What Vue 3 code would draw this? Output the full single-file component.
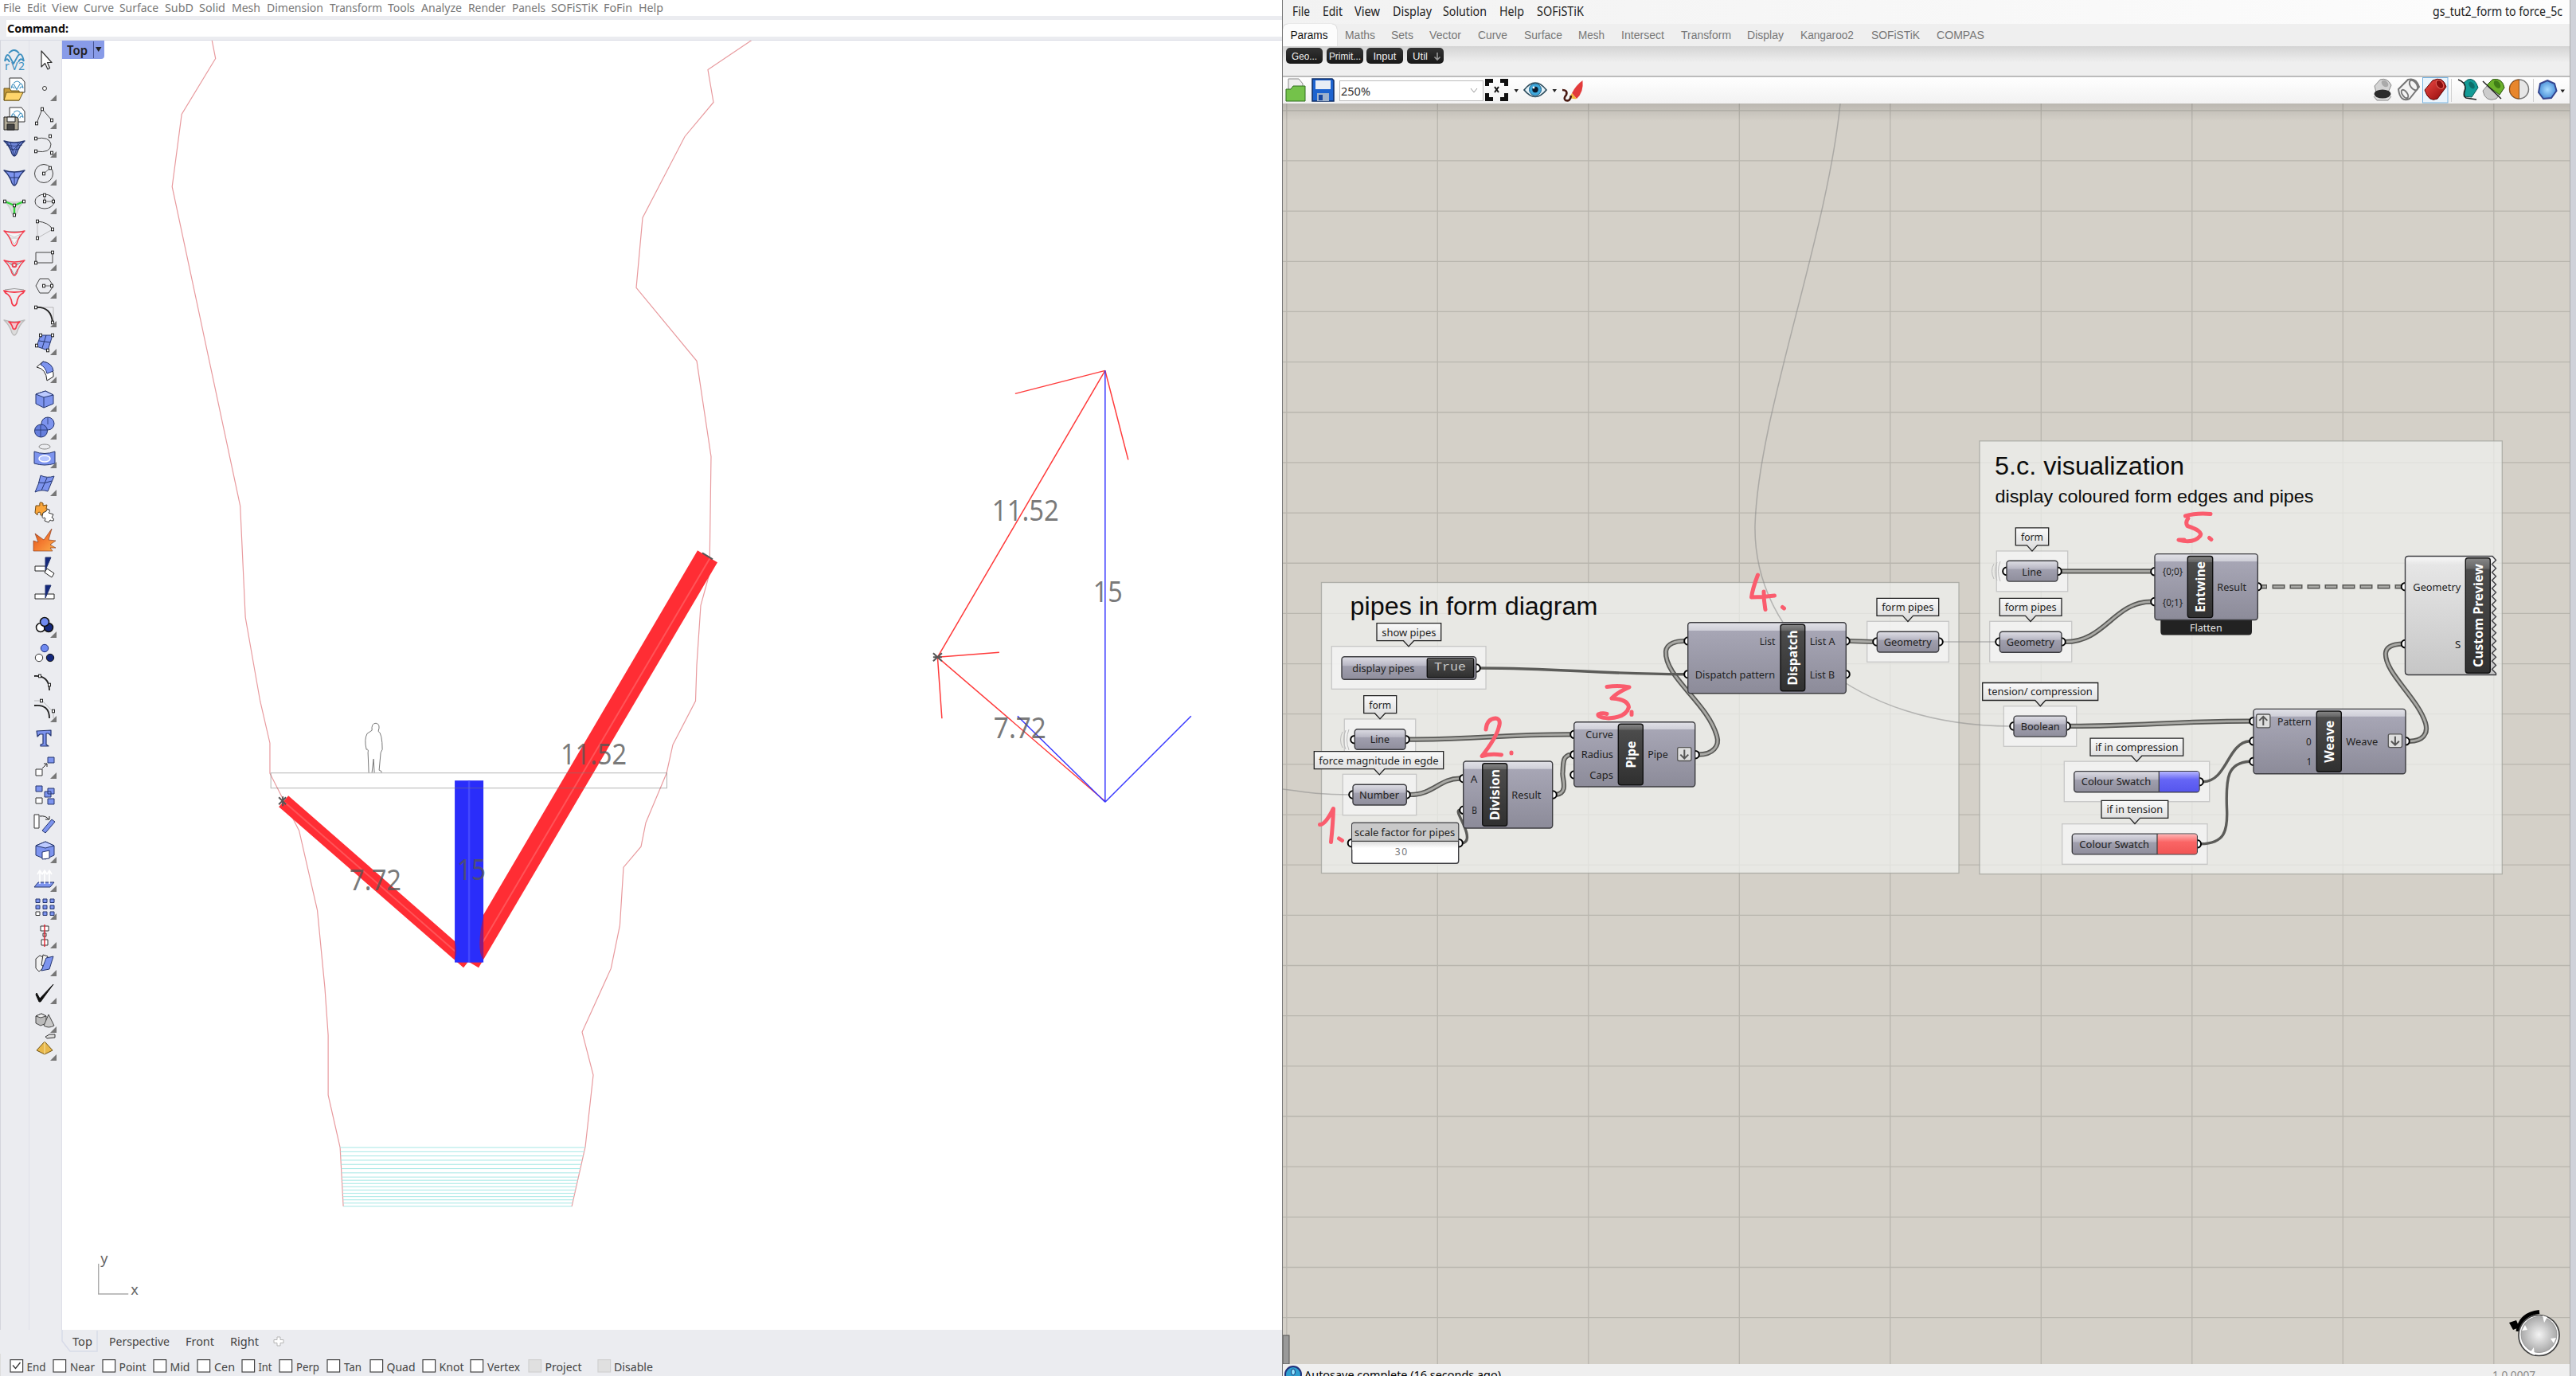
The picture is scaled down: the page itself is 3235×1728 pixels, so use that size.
<script setup>
const rhinoMenu = [
  ['File', 4, 22], ['Edit', 34, 24], ['View', 65, 33], ['Curve', 105, 38], ['Surface', 150, 49], ['SubD', 207, 36],
  ['Solid', 250, 33], ['Mesh', 291, 36], ['Dimension', 335, 71], ['Transform', 414, 66], ['Tools', 487, 34],
  ['Analyze', 529, 51], ['Render', 588, 47], ['Panels', 643, 42], ['SOFiSTiK', 692, 59], ['FoFin', 758, 36], ['Help', 802, 31],
]
const ghMenu = [['File', 12, 22], ['Edit', 50, 25], ['View', 90, 32], ['Display', 138, 49], ['Solution', 201, 55], ['Help', 272, 31], ['SOFiSTiK', 319, 59]]
const ghTabs = [
  ['Maths', 78, 38], ['Sets', 136, 28], ['Vector', 184, 40], ['Curve', 245, 37], ['Surface', 303, 48], ['Mesh', 371, 33],
  ['Intersect', 425, 54], ['Transform', 500, 63], ['Display', 583, 46], ['Kangaroo2', 650, 67], ['SOFiSTiK', 739, 61], ['COMPAS', 821, 60],
]
const pills = [['Geo...', 32], ['Primit...', 40], ['Input', 29], ['Util', 19]]
const viewTabs = [['Top', 13, 25], ['Perspective', 58.6, 76], ['Front', 155, 36], ['Right', 211, 36]]
const snaps = [
  ['End', 12, 32.5, 24], ['Near', 66, 87, 31], ['Point', 128, 148.5, 34], ['Mid', 192, 212.5, 25], ['Cen', 247, 268, 26],
  ['Int', 303, 323.5, 17], ['Perp', 350, 371, 29], ['Tan', 410, 431, 22], ['Quad', 463.5, 484, 36], ['Knot', 529.5, 550, 31],
  ['Vertex', 590, 611, 41], ['Project', 663, 683.5, 46], ['Disable', 750, 770, 49],
]
const slot = (list, i, start) => {
  const nextX = i + 1 < list.length ? list[i + 1][1] : list[i][1] + list[i][2]
  return { width: nextX - list[i][1] + 'px', marginLeft: i === 0 ? list[0][1] - start + 'px' : '0' }
}

const pt = (x, y) => `<rect x="${x - 1.5}" y="${y - 1.8}" width="3" height="3.6" fill="#fff" stroke="#222" stroke-width="1"/>`
const ln = (d, w = 1, c = '#444', f = 'none') => `<path d="${d}" fill="${f}" stroke="${c}" stroke-width="${w}" stroke-linejoin="round"/>`
const B = '#7d94ee', D = '#24356f', L = '#bccaff'
const vault = (fill, stroke, w = 1.4) => ln('M1 4Q14 8 27 4Q20 10 17 20Q14 26 11 20Q8 10 1 4Z', w, stroke, fill)
const brand = (s) => `<g transform="${s}">${ln('M2 14Q4 2 8 8L13 17L18 8Q23 0 26 14M7 4Q14-4 20 4M2 14Q5 8 8 15M26 14Q22 8 19 15', 1.8, '#3d8fbf')}</g>`

const leftIcons = [
  brand('translate(0 3)') + '<text x="2" y="28" font-size="14" fill="#3d8fbf" font-family="Noto Sans">r</text><text x="10" y="28" font-size="14" fill="#3d8fbf" font-family="Noto Sans">V</text><text x="19" y="28" font-size="14" fill="#3d8fbf" font-family="Noto Sans">2</text>',
  ln('M8 0H23L27 5V18H8Z', 1, '#333', '#fff') + brand('translate(9 4) scale(.62)') + ln('M1 13H8L10 16H20V28H1Z', 1, '#6b5417', '#c59a3a') + ln('M4 18H25L20 28H1Z', 1, '#6b5417', '#ffd56b'),
  ln('M8 0H23L27 5V18H8Z', 1, '#333', '#fff') + brand('translate(9 4) scale(.62)') + ln('M1 12H17L19 14V28H1Z', 1, '#222', '#b0a996') + ln('M5 12H15V18H5Z', 1, '#222', '#eee') + ln('M5 21H14V28H5Z', 1, '#222', '#444'),
  vault('#6f86d8', D) + ln('M4 9Q14 12 24 9M8 14Q14 16 20 14M9 6L14 23L19 6M5 6L12 16L22 6', 0.8, D),
  vault(B, D) + ln('M14 6V23M8 13H20', 1, D),
  vault('#ddd', '#ccc') + ln('M2 5L14 10L26 5M14 10V22', 2.4, '#2fd43a') + pt(2, 5) + pt(26, 5) + pt(14, 10) + pt(14, 22),
  ln('M3 5H25M6 8L14 21L22 8L14 12ZM9 13H19', 1, '#888') + vault('#fff8', '#f4394a'),
  ln('M4 5L14 12L24 5M10 15L14 23L18 15M9 8H19', 1, '#888') + vault('none', '#f4394a') + '<circle cx="14" cy="10" r="2.5" fill="none" stroke="#f4394a" stroke-width="1.6"/>',
  ln('M2 3Q14 0 26 3', 1, '#999') + ln('M1 4Q14 8 27 4L25 7Q18 10 17 20Q14 26 11 20Q10 10 3 7Z', 1.8, '#f4394a', '#ececf0'),
  vault('#dcdcdc', '#bbb') + ln('M7 6Q14 8 21 6Q17 9 16 14Q14 17 12 14Q11 9 7 6Z', 1.6, '#f4394a', '#f5c8cf'),
]

const toolIcons = [
  [ln('M10 2V22L14.5 17.5L18 25L20.5 23.5L17.5 16.5H23Z', 1.2, '#333', '#fff'), 0],
  ['<ellipse cx="14" cy="14" rx="2.5" ry="2.5" fill="#fff" stroke="#333"/>', 1],
  [ln('M4 22L11 4L23 18') + pt(4, 22) + pt(11, 4) + pt(23, 18), 1],
  [ln('M3 6Q20 3 22 13Q22 25 3 22') + pt(3, 6) + pt(21, 3) + pt(3, 22) + pt(23, 24), 1],
  ['<circle cx="13" cy="14" r="11.5" fill="none" stroke="#444"/>' + ln('M13 14L21 7', 0.8) + pt(13, 14) + pt(21, 7), 1],
  ['<ellipse cx="14" cy="14" rx="12" ry="9" fill="none" stroke="#444"/>' + ln('M14 6V14H25', 0.8) + pt(14, 6) + pt(14, 14) + pt(25, 14), 1],
  [ln('M5 4Q19 5 24 14') + ln('M5 4V25L24 14', 0.6, '#999') + pt(5, 4) + pt(5, 25) + pt(24, 14), 1],
  [ln('M3 7H24V20H3Z') + pt(24, 7) + pt(3, 20), 1],
  [ln('M8 5H19L25 14L19 23H8L3 14Z') + ln('M13 14H23', 0.8) + pt(13, 14) + pt(23, 14), 1],
  [ln('M3 5H25V25', 0.6, '#999') + ln('M3 5Q23 4 24 25', 1.8, '#222') + pt(3, 5) + pt(24, 24), 1],
  [ln('M9 5L24 5L18 24L4 19Z', 1, D, B) + ln('M16 5L11 21M7 12L21 14', 1, D) + pt(9, 5) + pt(24, 5) + pt(18, 24) + pt(4, 18), 1],
  [ln('M12 2Q24 4 25 17V21L17 26Q16 11 4 9Z', 1, '#222', '#fff') + ln('M12 2Q24 4 25 14L17 17Q15 9 9 6Z', 1, D, B), 1],
  [ln('M3 8L15 4L25 9V20L13 25L3 20Z', 1, D, B) + ln('M3 8L15 4L25 9L13 12Z', 1, D, L) + ln('M13 12V25', 1, D), 1],
  ['<circle cx="18" cy="9" r="8" fill="#7d94ee" stroke="#24356f"/><circle cx="9.500" cy="18" r="8" fill="#667fdd" stroke="#24356f"/>' + ln('M2 17H17M9 10V26M18 1V10', 0.8, D), 1],
  ['<ellipse cx="14" cy="3" rx="7" ry="3" fill="none" stroke="#888"/>' + ln('M1 9Q14 14 27 9V24Q14 28 1 24Z', 1, D, B) + '<ellipse cx="14" cy="18" rx="7" ry="4" fill="#b4c4ff" stroke="#fff" stroke-width="1.500"/>', 1],
  [ln('M9 3Q17 7 26 4L18 23Q10 20 2 24Q7 14 9 3Z', 1, D, B) + ln('M17 6L10 22M6 12Q14 14 23 10', 1, D), 1],
  [ln('M3 6H8Q7 1 10 2Q13 2 12 6L17 5L16 10Q20 10 19 13Q17 15 15 13L14 18H9Q10 14 7 14Q4 15 5 18L2 15Z', 1, '#744b12', '#f9a53a') + ln('M12 15L16 13Q17 9 20 11Q21 14 19 15L25 17L23 21Q27 22 25 25Q22 25 21 24L19 27L14 25Q16 22 14 21Q11 23 11 19Z', 1, '#333', '#fff'), 0],
  ['<defs><linearGradient id="burst" x1="0" y1="0" x2="1" y2="1"><stop offset="0" stop-color="#d3541a"/><stop offset=".5" stop-color="#f47a30"/><stop offset="1" stop-color="#fbb04a"/></linearGradient></defs><path d="M0 28V15L6 17L2 6L13 14L23 0L19 14L28 15L21 20L28 24L21 24L24 28Z" fill="url(#burst)" stroke="#7c2d12" stroke-width=".6"/>', 0],
  [ln('M2 11H16V17H2Z', 1, '#222', '#fff') + ln('M17 14L26 20L23 25L14 19Z', 1, '#222', '#fff') + ln('M15 0H22L15 16Z', 1, D, '#14287c'), 0],
  [ln('M2 11H26V17H2Z', 1, '#222', '#fff') + ln('M15 0H22L15 16Z', 1, D, '#14287c'), 0],
  ['<circle cx="9" cy="17" r="5.500" fill="#fff" stroke="#111" stroke-width="1.500"/><circle cx="19" cy="17" r="5.500" fill="#14287c" stroke="#111" stroke-width="1.500"/><circle cx="14" cy="10" r="5.500" fill="#6f8af0" stroke="#111" stroke-width="1.500"/>', 1],
  ['<circle cx="7" cy="20" r="4.700" fill="#fff" stroke="#333"/><circle cx="21" cy="20" r="4.700" fill="#14287c" stroke="#111"/><circle cx="14" cy="8" r="4.700" fill="#6f8af0" stroke="#14287c"/>', 0],
  [ln('M1 7Q20 6 20 25', 1.8, '#222') + pt(8, 7) + pt(20, 18), 0],
  [ln('M1 9Q20 7 20 25', 1.8, '#222') + ln('M1 3H11L25 17V25', 0.6, '#999') + pt(10, 3) + pt(25, 16), 1],
  [ln('M4 5L22 4V11L19 8H16V22L19 24H9V22L12 21V9H8L5 12Z', 1.2, D, B), 0],
  [ln('M3 18H11V26H3Z', 1, '#333', '#fff') + ln('M18 3H26V10H18Z', 1, D, B) + ln('M11 17L17 11M13 11H17V15', 1, '#222'), 1],
  [ln('M3 3H11V10H3Z', 1, D, B) + ln('M3 18H11V25H3Z', 1, '#333', '#fff') + ln('M18 6H26V13H18ZM14 10H22V17H14ZM18 19H26V26H18Z', 1, D, B), 0],
  [ln('M1 4H7V21H1Z', 1, '#333', '#fff') + ln('M11 24L23 10L27 13L15 27Z', 1, D, B) + ln('M8 6Q16 5 19 10M15 10H20V6', 1, '#222'), 0],
  [ln('M3 8L15 3L26 8V20L15 25L3 20Z', 1, D, B) + ln('M3 8L15 3L26 8L15 11Z', 1, D, L) + ln('M11 16L20 14V24L11 25Z', 1, D, '#fff'), 1],
  [ln('M6 18H26L21 24H1Z', 1, D, B) + ln('M8 20V5M5 8L8 3L11 8M14 20V5M11 8L14 3L17 8M20 20V5M17 8L20 3L23 8', 1.6, '#fff'), 1],
  [[0, 1, 2].map((r) => [0, 1, 2].map((c) => ln(`M${3 + c * 9} ${4 + r * 8}h5v4.500h-5Z`, 1, r === 2 && c === 0 ? '#333' : D, r === 2 && c === 0 ? '#fff' : B)).join('')).join(''), 1],
  [ln('M9 2H19V8H9ZM12 11H16V15H12ZM10 19H18V26H10Z', 1, '#333', '#fff') + ln('M14 0V28', 1.4, '#e11d2a'), 1],
  [ln('M3 8L8 4L12 6V20L7 24L3 20Z', 1, '#333', '#f2f2f2') + ln('M12 3L18 5L14 18L10 16Z', 1, '#333', '#eee') + ln('M16 7L25 5L20 21L10 23Z', 1, D, B), 1],
  [ln('M4 15L8 22L25 4L9 26H7L3 17Z', 1, '#111', '#111'), 1],
  [ln('M3 9L10 6L16 9V18L9 21L3 18Z', 1, '#444', '#bbb') + ln('M3 9L10 6L16 9L9 11Z', 1, '#444', '#eee') + ln('M19 7L26 21Q19 25 13 21Z', 1, '#444', '#c8c8c8'), 1],
  [ln('M15 -1L20 -4H27V0L17 1Z', 1, '#333', '#ddd') + ln('M14 5L24 16L14 21L4 16Z', 1, '#6b4f10', '#e8b84b') + ln('M14 5V21', 0.8, '#fff2c0'), 1],
]

const vLines = Array.from({ length: 9 }, (_, i) => 1615.8 + i * 189.5)
const hLines = Array.from({ length: 25 }, (_, i) => 138.8 + i * 63.16)

const groups = [
  { x: 1659.5, y: 731.5, w: 800.5, h: 365, main: 1 }, { x: 2486, y: 553.8, w: 656.3, h: 543.8, main: 1 },
  { x: 1672.3, y: 811.7, w: 193.7, h: 53.6 }, { x: 1688.3, y: 903, w: 89.4, h: 51 }, { x: 1686.3, y: 972.3, w: 92.4, h: 51.4 },
  { x: 2344.7, y: 780.3, w: 102.6, h: 51 }, { x: 2507.3, y: 692, w: 89.4, h: 50.8 }, { x: 2498.7, y: 780.3, w: 103, h: 50.9 },
  { x: 2516.3, y: 886.8, w: 91.4, h: 50.5 }, { x: 2592.3, y: 956.2, w: 182.4, h: 50.5 }, { x: 2589.7, y: 1034.7, w: 182.3, h: 50.6 },
]
const tags = [
  ['show pipes', 1729, 782.7, 80.7, 68.3, 1769], ['form', 1712.7, 873.7, 41, 28, 1733], ['force magnitude in egde', 1650.3, 943.7, 162.4, 150.4, 1732.3],
  ['form pipes', 2357, 751.3, 77.7, 65.3, 2396], ['form', 2531.3, 662.9, 41.4, 28, 2552], ['form pipes', 2511.3, 751.3, 77.7, 65, 2550],
  ['tension/ compression', 2489.7, 857.5, 145, 131.3, 2562.3], ['if in compression', 2625, 927.2, 116.7, 104.3, 2683.3], ['if in tension', 2639, 1005.3, 83.7, 70.7, 2681],
]
/* node: x, y, w, h, bar [x, y, w, h, label, length], ports [x, y, side], texts [label, x, baseline, width] */
const nodes = [
  { x: 1685, y: 824.7, w: 168.7, h: 28.6, ports: [[1854, 839, 1]], texts: [['display pipes', 1698.3, 844.3, 78]] },
  { x: 1701.3, y: 915.7, w: 63.7, h: 25.6, ports: [[1701, 928.7, 0], [1765, 928.7, 1]], texts: [['Line', 1720.7, 933.3, 24.3]] },
  { x: 1699, y: 985.3, w: 67.3, h: 25.7, ports: [[1699, 998, 0], [1766, 998, 1]], texts: [['Number', 1707, 1003, 50]] },
  { x: 1837.7, y: 956, w: 112, h: 84, bar: [1861.7, 958.7, 31, 78.6, 'Division', 64], ports: [[1838, 977.7, 0], [1838, 1017.3, 0], [1950, 998, 1]], texts: [['A', 1846.7, 983.3, 8.6], ['B', 1848.3, 1022.3, 6.7], ['Result', 1898.3, 1003, 37]] },
  { x: 1976.7, y: 906.7, w: 152, h: 81.3, bar: [2032.3, 909.3, 31, 76.4, 'Pipe', 34], ports: [[1977, 922.3, 0], [1977, 947.7, 0], [1977, 973, 0], [2129, 947.7, 1]], texts: [['Curve', 1991.3, 927.3, 34.7], ['Radius', 1985.7, 952.3, 40.3], ['Caps', 1996.3, 977.7, 29.7], ['Pipe', 2069.3, 952.3, 25.4]] },
  { x: 2119.7, y: 781.7, w: 198.6, h: 89, bar: [2236, 784.3, 30.7, 83.4, 'Dispatch', 69], ports: [[2120, 805, 0], [2120, 846.7, 0], [2318, 805, 1], [2318, 846.7, 1]], texts: [['List', 2209.7, 810.3, 19.6], ['Dispatch pattern', 2128.7, 852, 100.6], ['List A', 2272.7, 810.3, 32], ['List B', 2272.7, 852, 31.3]] },
  { x: 2357.3, y: 793.3, w: 77.4, h: 25.7, ports: [[2357, 806, 0], [2435, 806, 1]], texts: [['Geometry', 2365.7, 811, 60]] },
  { x: 2520, y: 704.3, w: 64, h: 25.8, ports: [[2520, 717.4, 0], [2584, 717.4, 1]], texts: [['Line', 2539.3, 722.5, 24.7]] },
  { x: 2511.3, y: 793.2, w: 77.7, h: 26, ports: [[2511, 806, 0], [2589, 806, 1]], texts: [['Geometry', 2519.7, 811, 60]] },
  { x: 2529, y: 899.1, w: 66.3, h: 26, ports: [[2529, 911.9, 0], [2595, 911.9, 1]], texts: [['Boolean', 2537.7, 917, 49]] },
  { x: 2706, y: 695.6, w: 129.3, h: 82.9, bar: [2747.3, 698.5, 31.4, 77.1, 'Entwine', 64], ports: [[2706, 717.8, 0], [2706, 755.6, 0], [2835, 736.7, 1]], texts: [['{0;0}', 2715.7, 722.3, 25.6], ['{0;1}', 2715.7, 760.6, 25.6], ['Result', 2784.3, 741.7, 36.7]] },
  { x: 2830, y: 890.4, w: 191, h: 81.4, bar: [2909.3, 893, 31, 76.3, 'Weave', 53], ports: [[2830, 905.7, 0], [2830, 930.8, 0], [2830, 956.2, 0], [3021, 930.8, 1]], texts: [['Pattern', 2860, 910.6, 42.7], ['0', 2896, 935.9, 6.7], ['1', 2896.5, 961, 6.7], ['Weave', 2946.3, 935.9, 40]] },
  { x: 2604.7, y: 968.6, w: 157.3, h: 26.1, swatch: [2711.3, 'blue'], ports: [[2762, 981.7, 1]], texts: [['Colour Swatch', 2613.7, 986.4, 87.6]] },
  { x: 2602.3, y: 1047.1, w: 157, h: 25.8, swatch: [2709, 'red'], ports: [[2759.3, 1059.8, 1]], texts: [['Colour Swatch', 2611.3, 1064.6, 87.7]] },
]
const arrows = [[2106.7, 938.7, 1], [2999.3, 921.8, 1], [2833.7, 897, -1]]
const zigzag = (() => {
  let d = 'M3024.5 698.5H3130L3134.500 703.500'
  for (let i = 0; i < 14; i++) {
    const y = 703.5 + i * 10.15
    d += `L3129.5 ${y + 5}L3134.5 ${y + 10.15}`
  }
  return d + 'V847.5H3024.500Q3020.500 847.500 3020.500 843.500V702.500Q3020.500 698.500 3024.500 698.500Z'
})()
const doubleWires = [
  'M1770 928.7C1860 928.7 1885 922 1972 922.3', 'M1771 998C1800 998 1808 977.7 1833 977.7', 'M1954 998C1971 996 1961 976 1962.500 970C1963.500 958 1962 950 1972 947.7',
  'M2133 947.7C2151 947.700 2160 937 2156 924C2144 882 2090 850 2092 818C2093 808 2105 805 2115 805', 'M2323 805L2352 806',
  'M2589 717.4H2701', 'M2594 806C2643 806 2655 756 2701 755.6', 'M2600 911.9C2690 912 2730 905.5 2825 905.7',
  'M3026 930.8C3042 930.800 3050 922 3046 908C3036 876 2994 844 2996 820C2997 811 3006 809 3016 808.6',
]
const singleWires = [
  'M1859 839C1960 839 2010 846.700 2115 846.7', 'M1836 1058.7C1844 1058 1844 1050 1839 1038C1835 1028 1828 1018 1833 1017.300',
  'M2767 981.7C2797 981 2797 933 2825 930.8', 'M2764 1059.8C2793 1059 2798 1045 2796.500 1015C2795 975 2798 958 2825 956.2',
]
const ink = [
  'M1657.5 1035.500Q1664 1036 1674.500 1015.500Q1674 1034 1671.500 1057.500M1681.500 1053L1685.500 1055.500',
  'M1866 916Q1867 903 1878 902Q1886 903 1882 914C1879 926 1870 938 1861 949.500Q1872 946 1885.500 948M1898 945V946',
  'M2018 862.500Q2034 860.500 2046 863Q2030 870 2024 877Q2044 878 2045.500 888Q2042 901 2020 902Q2006 901 2007 897Q2012 895 2018 896.500M2049 894V897.500',
  'M2207.500 722Q2201 739 2199.500 750Q2214 750 2228.500 748M2215 743Q2215 755 2217 765.500M2238.500 762.500L2240.500 764',
  'M2744.500 648Q2758 644 2776 645.500M2748 651Q2744 656 2747 660.500Q2767 667 2763 673Q2755 683 2736 678H2743M2774.500 675.500L2777 677.500',
]
const hatch = Array.from({ length: 17 }, (_, i) => 1441 + (i < 8 ? i * 5.3 : 37 + (i - 7) * 4.1))
  .map((y) => ({ y, x1: 427 + (y - 1441) * 0.055, x2: 735 - (y - 1441) * 0.23 }))
</script>

<template>
  <div class="screen">
    <section class="rhino">
      <nav class="rhino-menu">
        <svg v-for="(m, i) in rhinoMenu" :key="m[0]" class="word" :style="slot(rhinoMenu, i, 0)">
          <text x="0" y="15" :textLength="m[2]" lengthAdjust="spacingAndGlyphs">{{ m[0] }}</text>
        </svg>
      </nav>
      <div class="command"><svg class="word"><text x="1" y="16" textLength="77" lengthAdjust="spacingAndGlyphs">Command:</text></svg></div>
      <div class="work">
        <aside class="strip first">
          <svg v-for="(ic, i) in leftIcons" :key="i" class="tool" viewBox="0 0 28 28" v-html="ic"></svg>
        </aside>
        <aside class="strip second">
          <div v-for="(ic, i) in toolIcons" :key="i" class="cell">
            <svg class="glyph" viewBox="0 0 28 28" v-html="ic[0]"></svg>
            <i v-if="ic[1]" class="corner"></i>
          </div>
        </aside>
        <main class="view">
          <svg class="drawing" viewBox="78 50.500 1532 1619.500">
            <g class="cliff">
              <path d="M266 50L270.500 73L228 143L216 234L301.500 635L308 775L326.500 880L338.800 933L338.800 971L375.500 1043L398.400 1143L407.800 1240L412 1300L412 1375L427 1441L431 1515" />
              <path d="M944 50L889 87L896 128L860 171L807 273L799 361L875 453L893 573L891 720L880 760L875 835L873.500 880L845 935L837 971L811 1033L805 1063L783 1089L778.400 1162L767.300 1216L731 1296L745 1350L735 1440L718 1515" />
            </g>
            <g class="water"><line v-for="h in hatch" :key="h.y" :x1="h.x1" :x2="h.x2" :y1="h.y" :y2="h.y" /></g>
            <path class="person" d="M463 970L462 945Q463 940 460 941Q457 928 461 921L467 917Q466 908 472 908Q478 909 475 918Q480 921 480 941L478 945L476 967Q480 968 479 970M467 970L469 953L470 970" />
            <polygon class="red-pipe" points="362,999 593,1201 582,1215 350,1013" />
            <path class="pipe-light" d="M357 1007L587 1208" />
            <path class="origin" d="M350 1001L359 1010M359 1001L350 1010M355 1000V1012" />
            <polygon class="red-pipe" points="576.500,1200.600 876,691 901,706 601,1215" />
            <path class="pipe-light" d="M592 1207L892 700" />
            <rect class="blue-pipe" x="571" y="980" width="36" height="228.500" />
            <path class="blue-light" d="M589 980V1208" />
            <path d="M607 1150Q598 1190 606 1204L607 1204Z" fill="#8c1a80" />
            <path d="M571 1181Q575 1195 571 1204Z" fill="#8c1a80" />
            <rect class="deck" x="340" y="970.500" width="497.500" height="19" />
            <path class="origin" d="M882 694L895 702" />
            <g class="force">
              <path class="r" d="M1388 465L1177.500 825L1388 1006M1388 465L1275 494M1388 465L1417 577M1177.500 825L1255 819M1177.500 825L1183 902" />
              <path class="b" d="M1388 465V1007M1388 1007L1278 899M1388 1007L1496 899" />
              <path class="origin" d="M1172 820L1183 830M1183 820L1172 830M1172 825H1183" />
            </g>
            <g class="dims">
              <text x="704" y="960" textLength="83" lengthAdjust="spacingAndGlyphs">11.52</text>
              <text x="439" y="1117.500" textLength="65" lengthAdjust="spacingAndGlyphs">7.72</text>
              <text x="574" y="1105" textLength="36" lengthAdjust="spacingAndGlyphs">15</text>
              <text x="1246" y="654" textLength="84" lengthAdjust="spacingAndGlyphs">11.52</text>
              <text x="1373" y="755.500" textLength="37" lengthAdjust="spacingAndGlyphs">15</text>
              <text x="1248" y="927" textLength="66" lengthAdjust="spacingAndGlyphs">7.72</text>
            </g>
            <path class="axis" d="M123.500 1587V1625H161" />
            <g class="axis-text"><text x="126" y="1587">y</text><text x="164" y="1626">x</text></g>
          </svg>
          <div class="view-label"><svg class="word"><text x="6" y="17.500" textLength="26" lengthAdjust="spacingAndGlyphs">Top</text><path d="M39.500 1V22" stroke="#45528f" /><path d="M42 8H49.500L45.700 14Z" fill="#222" /></svg></div>
        </main>
      </div>
      <div class="view-tabs">
        <svg v-for="(t, i) in viewTabs" :key="t[0]" class="word" :style="slot(viewTabs, i, 0)">
          <text x="0" y="20" :textLength="t[2]" lengthAdjust="spacingAndGlyphs">{{ t[0] }}</text>
          <path v-if="i === 0" d="M-13 0V14L-3 27H31V1" fill="none" stroke="#d8dbe8" stroke-width="1.500" />
          <path v-if="i === 3" d="M59 9H63V12.500H67V16.500H63V20H59V16.500H55V12.500H59Z" fill="#fff" stroke="#b5b5b5" />
        </svg>
      </div>
      <div class="snaps">
        <svg v-for="(s, i) in snaps" :key="s[0]" class="word" :class="{ off: i > 10 }" :style="slot(snaps, i, 0)">
          <rect class="box" x="0" y="7.600" width="15.600" height="15.400" />
          <path v-if="i === 0" d="M3 14.500L6.500 18.500L12.500 11" fill="none" stroke="#333" stroke-width="1.300" />
          <text :x="s[2] - s[1]" y="21.500" :textLength="s[3]" lengthAdjust="spacingAndGlyphs">{{ s[0] }}</text>
        </svg>
      </div>
    </section>

    <section class="gh">
      <header class="gh-menu">
        <nav class="row">
          <svg v-for="(m, i) in ghMenu" :key="m[0]" class="word" :style="slot(ghMenu, i, 0)"><text x="0" y="20.300" :textLength="m[2]" lengthAdjust="spacingAndGlyphs">{{ m[0] }}</text></svg>
        </nav>
        <svg class="word doc"><text x="0" y="20.300" textLength="163" lengthAdjust="spacingAndGlyphs">gs_tut2_form to force_5c</text></svg>
      </header>
      <div class="gh-tabs">
        <div class="tab-on"><svg class="word"><text x="9.500" y="18.800" textLength="47" lengthAdjust="spacingAndGlyphs">Params</text></svg></div>
        <svg v-for="(m, i) in ghTabs" :key="m[0]" class="word" :style="slot(ghTabs, i, 68)"><text x="0" y="19" :textLength="m[2]" lengthAdjust="spacingAndGlyphs">{{ m[0] }}</text></svg>
      </div>
      <div class="ribbon">
        <div v-for="(p, i) in pills" :key="p[0]" class="pill">
          <svg class="word">
            <text :x="i === 3 ? 7 : (46 - p[1]) / 2" y="15" :textLength="p[1]" lengthAdjust="spacingAndGlyphs">{{ p[0] }}</text>
            <path v-if="i === 3" d="M38 6V15M34.500 11.500L38 15L41.500 11.500" fill="none" stroke="#999" stroke-width="1.600" />
          </svg>
        </div>
      </div>
      <div class="toolbar">
        <svg class="tb-left" viewBox="0 0 400 33">
          <path d="M7 2H20L25 8V20H7Z" fill="#eee" stroke="#888" /><path d="M4 15H10L13 11H28V30H4Z" fill="#74c24a" stroke="#2f6f1c" />
          <path d="M37 2H62L64 4V30H37Z" fill="#1d63cf" stroke="#0d2c66" stroke-width="1.500" /><path d="M41 4H60V15H41Z" fill="#e9eef5" /><path d="M43 20H58V30H43Z" fill="#9fb2cc" /><path d="M45 22H50V29H45Z" fill="#1746a0" />
          <rect x="71.500" y="4.500" width="180" height="25" fill="#fff" stroke="#bdbdbd" /><text x="73" y="22.500" textLength="37" lengthAdjust="spacingAndGlyphs">250%</text><path d="M236 14L240 19L244 14" fill="none" stroke="#999" />
          <path d="M256.500 11V4.500H264M273 4.500H280.500V11M280.500 20V27.500H273M264 27.500H256.500V20" fill="none" stroke="#111" stroke-width="5" /><path d="M266 12L271 19M271 12L266 19" stroke="#111" stroke-width="2" />
          <path d="M290.500 15H296L293.200 19ZM338.500 15H344L341.200 19Z" fill="#222" />
          <path d="M303 16Q317-2 331 16Q317 33 303 16Z" fill="#e3f1f7" stroke="#2b4b5b" stroke-width="1.700" /><circle cx="317" cy="15.500" r="7.500" fill="#3fa9dc" stroke="#1c5f8a" /><circle cx="317" cy="15.500" r="3.700" fill="#0b1a2b" /><circle cx="315" cy="13" r="1.400" fill="#fff" />
          <path d="M376.500 4Q368 10 363 20L369 27Q378 19 376.500 4Z" fill="#e33b3b" /><path d="M363 20L369 27Q364 28 360 25Z" fill="#f3b73c" /><path d="M362 23Q361 31 355 29Q352 27 356 22Q358 16 351 16" fill="none" stroke="#4a1a12" stroke-width="2.600" />
        </svg>
        <svg class="tb-right" viewBox="2977 97 250 33">
          <defs>
            <linearGradient id="redCyl" x1="0" y1="0" x2="1" y2="1"><stop offset="0" stop-color="#f04a45" /><stop offset="1" stop-color="#8d0808" /></linearGradient>
            <radialGradient id="blueBall"><stop offset="0" stop-color="#a8dcff" /><stop offset="1" stop-color="#4a90d9" /></radialGradient>
          </defs>
          <path d="M2982 108L2989 100Q2998 97 3003 107L2999 116H2984Z" fill="#d4d4d4" stroke="#888" /><ellipse cx="2995" cy="105" rx="5" ry="3.500" transform="rotate(45 2995 105)" fill="#aaa" /><path d="M2981 121L2985 126H2999L3003 121" fill="#ddd" stroke="#888" /><ellipse cx="2992" cy="118" rx="10.500" ry="5.500" fill="#2b2b2b" />
          <g fill="#f4f4f4" stroke="#777" stroke-width="2"><path d="M3012 112L3024 100Q3034 97 3038 109L3026 124Q3014 129 3012 112Z" /><ellipse cx="3031" cy="107" rx="4" ry="7" transform="rotate(-35 3031 107)" /><ellipse cx="3020" cy="118" rx="3" ry="6" transform="rotate(-35 3020 118)" /></g>
          <rect x="3042.500" y="97.500" width="31.500" height="31.500" fill="#eaf4fc" stroke="#77b2df" />
          <path d="M3045 113L3055 101Q3068 95 3072 109L3061 124Q3050 129 3045 113Z" fill="url(#redCyl)" stroke="#5c0606" /><ellipse cx="3064" cy="106" rx="4" ry="6" transform="rotate(-35 3064 106)" fill="#8b0f0f" stroke="#e86a60" />
          <path d="M3078.500 99V128M3181.500 99V128" stroke="#d0d0d0" />
          <path d="M3094 104L3099 100Q3108 97 3112 110L3104 122L3094 121Q3098 112 3094 104Z" fill="#139b96" stroke="#0b5a57" /><path d="M3087 100Q3096 103 3096 111Q3092 120 3097 123L3110 125" fill="none" stroke="#222" stroke-width="1.500" /><ellipse cx="3104" cy="107" rx="3" ry="5" transform="rotate(-35 3104 107)" fill="#0d6e6a" />
          <path d="M3118 114L3130 100Q3142 97 3145 110L3135 124Q3121 129 3118 114Z" fill="#ccc" stroke="#888" /><path d="M3123 107L3130 100Q3142 97 3145 110L3139 119Z" fill="#6bb12b" stroke="#2d5c0c" /><ellipse cx="3136" cy="106" rx="3.500" ry="5.500" transform="rotate(-35 3136 106)" fill="#3f7d17" /><path d="M3118 102L3141 124" stroke="#222" stroke-width="1.500" />
          <circle cx="3163.500" cy="112" r="12" fill="#e6e6e6" stroke="#777" stroke-width="1.500" /><path d="M3163.500 100A12 12 0 0 0 3163.500 124Z" fill="#e8862c" stroke="#8c4a10" />
          <path d="M3199 101L3208 105L3210.500 114L3204 123L3194 124L3188 116L3190 105Z" fill="url(#blueBall)" stroke="#34458f" stroke-width="2" />
          <path d="M3215.500 112.500H3221L3218.200 116.500Z" fill="#222" />
        </svg>
      </div>
      <svg class="canvas" viewBox="1611 130 1616 1583">
        <defs>
          <linearGradient id="capsule" x1="0" y1="0" x2="0" y2="1"><stop offset="0" stop-color="#e2e2e8" /><stop offset=".11" stop-color="#cfcfd8" /><stop offset=".12" stop-color="#a7a6b5" /><stop offset="1" stop-color="#8c8b99" /></linearGradient>
          <linearGradient id="small" x1="0" y1="0" x2="0" y2="1"><stop offset="0" stop-color="#dedee5" /><stop offset=".38" stop-color="#b9b8c5" /><stop offset=".42" stop-color="#a09fae" /><stop offset="1" stop-color="#8f8e9c" /></linearGradient>
          <linearGradient id="ink" x1="0" y1="0" x2="0" y2="1"><stop offset="0" stop-color="#888" /><stop offset=".09" stop-color="#666" /><stop offset=".1" stop-color="#4c4c4c" /><stop offset="1" stop-color="#303030" /></linearGradient>
          <linearGradient id="tagFill" x1="0" y1="0" x2="0" y2="1"><stop offset="0" stop-color="#fafafa" /><stop offset="1" stop-color="#d8d8d8" /></linearGradient>
          <linearGradient id="panelFill" x1="0" y1="0" x2="0" y2="1"><stop offset="0" stop-color="#dcdcdc" /><stop offset=".8" stop-color="#ffffff" /></linearGradient>
          <linearGradient id="pale" x1="0" y1="0" x2="0" y2="1"><stop offset="0" stop-color="#fafafa" /><stop offset=".07" stop-color="#e6e6e6" /><stop offset="1" stop-color="#c6c6c6" /></linearGradient>
          <linearGradient id="blue" x1="0" y1="0" x2="0" y2="1"><stop offset="0" stop-color="#b4b4ff" /><stop offset=".4" stop-color="#6565f5" /><stop offset="1" stop-color="#5656ee" /></linearGradient>
          <linearGradient id="red" x1="0" y1="0" x2="0" y2="1"><stop offset="0" stop-color="#ffb4b4" /><stop offset=".4" stop-color="#fa6565" /><stop offset="1" stop-color="#f15555" /></linearGradient>
          <radialGradient id="knob"><stop offset="0" stop-color="#f4f4f4" /><stop offset="1" stop-color="#aaa" /></radialGradient>
          <linearGradient id="topShade" x1="0" y1="0" x2="0" y2="1"><stop offset="0" stop-color="#000" stop-opacity=".12" /><stop offset="1" stop-color="#000" stop-opacity="0" /></linearGradient>
        </defs>
        <rect x="1611" y="130" width="1616" height="1583" fill="#d4d0c8" />
        <g class="grid">
          <line v-for="x in vLines" :key="x" :x1="x" :x2="x" y1="130" y2="1713" />
          <line v-for="y in hLines" :key="y" x1="1611" x2="3227" :y1="y" :y2="y" />
        </g>
        <rect x="1611" y="130" width="1616" height="22" fill="url(#topShade)" />
        <rect v-for="(g, i) in groups" :key="i" class="group" :class="{ sub: !g.main }" :x="g.x" :y="g.y" :width="g.w" :height="g.h" />
        <path class="faint" d="M2311 130C2294 300 2208 520 2204 660C2202 800 2330 912 2526 912M1611 991C1640 995 1660 998 1694 998M2440 806H2506" />
        <g class="title">
          <text x="1695.500" y="772.300" textLength="311" lengthAdjust="spacingAndGlyphs">pipes in form diagram</text>
          <text x="2505" y="595.600" textLength="238" lengthAdjust="spacingAndGlyphs">5.c. visualization</text>
          <text class="subtitle" x="2505.500" y="630.500" textLength="400" lengthAdjust="spacingAndGlyphs">display coloured form edges and pipes</text>
        </g>
        <g v-for="(w, i) in doubleWires" :key="'d' + i" class="wire"><path class="outer" :d="w" /><path class="inner" :d="w" /></g>
        <path v-for="(w, i) in singleWires" :key="'s' + i" class="single" :d="w" />
        <g class="dash"><path class="outer" d="M2840 736.700H2847M2853.500 736.700H3016" /><path class="inner" d="M2840 736.700H2846M2855 736.700H3016" /></g>
        <g class="waves"><path d="M1686 919Q1681 929 1686 939M1690 917Q1685 929 1690 941M1694 916Q1689 929 1694 942M2504 708Q2499 717 2504 727M2508 706Q2503 717 2508 729M2512 705Q2507 717 2512 730" /></g>

        <path class="blade" d="M2713.300 776H2828V793Q2828 797.500 2824 797.500H2717Q2713.300 797.500 2713.300 793Z" />
        <text class="flat" x="2750" y="792.600" textLength="40.700" lengthAdjust="spacingAndGlyphs">Flatten</text>

        <g v-for="(n, i) in nodes" :key="'n' + i" class="node">
          <circle v-for="(p, k) in n.ports" :key="k" class="port" :cx="p[0]" :cy="p[1]" r="4.800" />
          <rect class="body" :fill="n.bar ? 'url(#capsule)' : 'url(#small)'" :x="n.x" :y="n.y" :width="n.w" :height="n.h" rx="3.500" />
          <template v-if="n.bar">
            <rect class="bar" :x="n.bar[0]" :y="n.bar[1]" :width="n.bar[2]" :height="n.bar[3]" rx="3" />
            <text class="bar-text" :transform="`translate(${n.bar[0] + n.bar[2] / 2 + 6} ${n.bar[1] + (n.bar[3] + n.bar[5]) / 2}) rotate(-90)`" :textLength="n.bar[5]" lengthAdjust="spacingAndGlyphs">{{ n.bar[4] }}</text>
          </template>
          <template v-if="n.swatch"><rect :x="n.swatch[0]" :y="n.y + 0.5" :width="n.x + n.w - n.swatch[0] - 0.5" :height="n.h - 1" rx="2" :fill="`url(#${n.swatch[1]})`" /><line class="split" :x1="n.swatch[0]" :x2="n.swatch[0]" :y1="n.y" :y2="n.y + n.h" /></template>
          <text v-for="t in n.texts" :key="t[0]" :x="t[1]" :y="t[2]" :textLength="t[3]" lengthAdjust="spacingAndGlyphs">{{ t[0] }}</text>
        </g>
        <rect class="bar" x="1792.300" y="827" width="58.400" height="23.700" rx="1.500" />
        <text class="mono" x="1801" y="842.300" textLength="40" lengthAdjust="spacingAndGlyphs">True</text>

        <g class="node">
          <circle class="port" cx="1697.500" cy="1058.700" r="4.800" /><circle class="port" cx="1832" cy="1058.700" r="4.800" />
          <rect class="body" x="1697.700" y="1033.300" width="134" height="51" rx="3" fill="#fff" />
          <path d="M1698.200 1056V1036Q1698.200 1033.800 1701 1033.800H1828.500Q1831.200 1033.800 1831.200 1036V1056Z" fill="#c9c9c9" />
          <rect x="1698.400" y="1057" width="132.600" height="10" fill="url(#panelFill)" />
          <line class="split" x1="1698" x2="1831.500" y1="1056.300" y2="1056.300" />
          <text x="1701" y="1049.700" textLength="126.300" lengthAdjust="spacingAndGlyphs">scale factor for pipes</text>
          <text class="value" x="1751.700" y="1073.500" textLength="15.500">30</text>
          <circle class="port" cx="3020.500" cy="736.700" r="4.800" /><circle class="port" cx="3020.500" cy="808.600" r="4.800" />
          <path class="body" :d="zigzag" fill="url(#pale)" />
          <rect class="bar" x="3096.300" y="700.700" width="31" height="144.600" rx="3" />
          <text class="bar-text" transform="translate(3117.800 838) rotate(-90)" textLength="130" lengthAdjust="spacingAndGlyphs">Custom Preview</text>
          <text x="3030.300" y="742" textLength="60" lengthAdjust="spacingAndGlyphs">Geometry</text><text x="3083" y="813.700">S</text>
        </g>
        <g v-for="(a, i) in arrows" :key="'a' + i">
          <rect class="btn" :x="a[0]" :y="a[1]" width="17.200" height="16.800" rx="2" />
          <path class="btn-arrow" :transform="`translate(${a[0] + 8.6} ${a[1] + 8.4}) scale(1 ${a[2]})`" d="M0-5.500V5M-5 .5L0 5.500L5 .5" />
        </g>
        <g v-for="(t, i) in tags" :key="'t' + i" class="tag">
          <path :d="`M${t[1]} ${t[2]}h${t[3]}v22H${t[5] + 6.5}l-6.500 7.200l-6.500 -7.200H${t[1]}Z`" />
          <text :x="t[1] + (t[3] - t[4]) / 2" :y="t[2] + 15.8" :textLength="t[4]" lengthAdjust="spacingAndGlyphs">{{ t[0] }}</text>
        </g>
        <path v-for="(p, i) in ink" :key="'i' + i" class="marker" :d="p" />

        <g>
          <path d="M3162 1672Q3165 1650 3189 1647.500" fill="none" stroke="#000" stroke-width="5" /><path d="M3151 1661L3160 1658L3164 1667L3156 1670Z" fill="#000" />
          <circle cx="3188.500" cy="1677" r="25.500" fill="#fff" stroke="#444" stroke-width="1.700" /><circle cx="3188.500" cy="1676" r="22.500" fill="url(#knob)" stroke="#999" />
          <path d="M3193 1652L3199 1654L3195 1661ZM3167 1671L3171 1664L3174 1670ZM3210 1680L3207 1687L3203 1681ZM3183 1702L3177 1699L3182 1692Z" fill="#fff" />
          <rect x="1611" y="1677" width="8" height="36" fill="#999" stroke="#555" />
        </g>
      </svg>
      <footer class="status">
        <svg class="word" viewBox="1611 1713 1616 15">
          <circle cx="1624" cy="1726" r="10" fill="#2e9fd0" stroke="#1f2f7a" stroke-width="2" /><ellipse cx="1624" cy="1723" rx="2.500" ry="4" fill="#8fe3ff" stroke="#173a7a" />
          <text x="1638" y="1732" textLength="247" lengthAdjust="spacingAndGlyphs">Autosave complete (16 seconds ago)</text>
          <text x="3130" y="1732" fill="#888" textLength="54" lengthAdjust="spacingAndGlyphs">1.0.0007</text>
        </svg>
      </footer>
    </section>
    <div class="edge"></div>
  </div>
</template>

<style>
html, body { margin: 0; overflow: hidden; }
</style>

<style scoped>
.screen { display: flex; width: 3235px; height: 1728px; overflow: hidden; background: #ebecf0; font-family: "Noto Sans", "Open Sans", sans-serif; }
.word { display: block; height: 100%; overflow: visible; flex: none; }
.rhino { display: flex; flex-direction: column; width: 1610px; flex: none; overflow: hidden; }
.rhino-menu { display: flex; height: 20px; background: #fff; }
.rhino-menu text { font-size: 14px; fill: #777; }
.command { height: 21px; margin: 5px 0 4px 8px; background: #fff; }
.command text { font-size: 15px; font-weight: 700; fill: #111; }
.work { display: flex; height: 1620px; border-top: 1px solid #d9dbe4; box-sizing: border-box; }
.strip { display: flex; flex-direction: column; box-sizing: border-box; border-right: 1px solid #dfe0e9; }
.first { width: 37px; padding: 9px 0 0 3px; border-left: 1px solid #d4d5dc; gap: 9.6px; }
.first .tool { width: 28px; height: 28px; overflow: visible; flex: none; }
.second { width: 41px; padding-top: 7px; }
.cell { position: relative; display: flex; height: 35.46px; align-items: center; padding-left: 4.5px; flex: none; }
.glyph { width: 28px; height: 28px; overflow: visible; }
.corner { position: absolute; right: 6px; bottom: 2px; border-left: 8px solid transparent; border-bottom: 8px solid #777; }
.view { position: relative; flex: 1; background: #fff; overflow: hidden; }
.drawing { display: block; width: 1532px; height: 1619px; }
.view-label { position: absolute; left: 0; top: 0; width: 53px; height: 22.5px; background: #889be8; border-radius: 0 0 4px 0; }
.view-label text { font-size: 16.5px; font-weight: 600; fill: #222; }
.cliff path { fill: none; stroke: #e89a9e; stroke-width: 1.2; }
.water line { stroke: #a6e8e5; stroke-width: 1; }
.person { fill: none; stroke: #777; stroke-width: 1; }
.deck { fill: none; stroke: #777; stroke-opacity: .55; }
.red-pipe { fill: #ff2d34; }
.pipe-light { stroke: #ff5458; stroke-width: 2; }
.blue-pipe { fill: #2a2dfa; }
.blue-light { stroke: #4448ff; stroke-width: 2.5; }
.origin { fill: none; stroke: #555; stroke-width: 2; }
.force .r { fill: none; stroke: #ff3b3b; stroke-width: 1.5; }
.force .b { fill: none; stroke: #3a3aff; stroke-width: 1.5; }
.dims text { font-size: 36px; fill: #555; fill-opacity: .78; }
.axis { fill: none; stroke: #aaa; stroke-width: 1.4; }
.axis-text text { font-size: 18px; fill: #666; }
.view-tabs { display: flex; height: 30px; padding-left: 78px; }
.view-tabs text, .snaps text { font-size: 15px; fill: #444; }
.snaps { display: flex; height: 28px; border-left: 1px solid #ddd; box-sizing: border-box; }
.box { fill: #fff; stroke: #444; stroke-width: 1.2; }
.off .box { fill: #e0e0e0; stroke: #d0d0d0; }
.gh { display: flex; flex-direction: column; width: 1616px; flex: none; border-left: 1px solid #777; overflow: hidden; background: #efefef; }
.gh-menu { display: flex; justify-content: space-between; height: 30px; background: linear-gradient(90deg, #f2f2f2, #fdfdfd); }
.gh-menu text { font-size: 15.5px; fill: #222; }
.row { display: flex; }
.doc { width: 172px; }
.gh-tabs { display: flex; height: 28px; font-family: "Liberation Sans", sans-serif; }
.gh-tabs text { font-size: 14px; fill: #777; }
.tab-on { width: 68px; background: #fcfcfc; border-radius: 7px 7px 0 0; box-shadow: 0 0 1px #999; }
.tab-on text { fill: #111; }
.ribbon { display: flex; gap: 4.5px; box-sizing: border-box; height: 39px; padding: 2px 0 0 4px; background: linear-gradient(#d4d4d4, #efefef 55%); border-bottom: 2px solid #bcbcbc; }
.pill { width: 46px; height: 20px; border-radius: 5px; background: linear-gradient(#333, #181818); }
.pill text { font-size: 13.5px; fill: #eee; font-family: "Liberation Sans", sans-serif; }
.toolbar { display: flex; justify-content: space-between; height: 33px; background: linear-gradient(#fff, #f2f2f2); }
.tb-left { width: 400px; height: 33px; }
.tb-left text { font-size: 15px; fill: #333; }
.tb-right { width: 250px; height: 33px; }
.canvas { display: block; width: 1616px; height: 1583px; flex: none; }
.grid line { stroke: #b9b6ae; stroke-width: 1.3; }
.group { fill: #f1f2f0; fill-opacity: .7; stroke: #9fa09a; stroke-opacity: .75; stroke-width: 1.3; }
.sub { fill: #f6f6f6; fill-opacity: .65; stroke: #bbb; }
.faint { fill: none; stroke: #888; stroke-opacity: .55; stroke-width: 1.5; }
.title text { font-family: "Liberation Sans", sans-serif; font-size: 31px; fill: #0c0c0c; }
.title .subtitle { font-size: 22.5px; }
.outer { fill: none; stroke: #585855; stroke-width: 6.2; }
.inner { fill: none; stroke: #a9a9a5; stroke-width: 2.8; }
.single { fill: none; stroke: #5c5c59; stroke-width: 3.4; }
.dash .outer { stroke-dasharray: 16 6; stroke-width: 5.5; stroke-linecap: butt; }
.dash .inner { stroke-dasharray: 13 9; stroke-width: 2.4; }
.waves path { fill: none; stroke: #bbb; stroke-width: 1; }
.node text { font-size: 13.4px; fill: #222; }
.node .value { fill: #777; font-size: 12px; }
.body { stroke: #3c3c40; stroke-width: 1.4; }
.port { fill: #fff; stroke: #000; stroke-width: 2; }
.bar { fill: url(#ink); stroke: #111; stroke-width: 1.4; }
.node .bar-text { fill: #fff; font-size: 16px; font-weight: 700; }
.split { stroke: #444; stroke-width: 1.3; }
.mono { font-family: "Liberation Mono", monospace; font-size: 14.5px; fill: #c4c4c4; }
.blade { fill: #222; }
.flat { font-size: 13.4px; fill: #e6e6e6; }
.btn { fill: #dedede; stroke: #555; stroke-width: 1.3; }
.btn-arrow { fill: none; stroke: #555; stroke-width: 2; }
.tag path { fill: url(#tagFill); stroke: #222; stroke-width: 1.3; }
.tag text { font-size: 13.4px; fill: #222; }
.marker { fill: none; stroke: #fa5c6d; stroke-width: 5; stroke-linecap: round; stroke-linejoin: round; }
.status { height: 15px; overflow: hidden; }
.status .word { width: 1616px; height: 15px; }
.status text { font-size: 15px; }
.edge { width: 8px; height: 1728px; border-left: 1px solid #aaa; background: #d0d2d9; }
</style>
